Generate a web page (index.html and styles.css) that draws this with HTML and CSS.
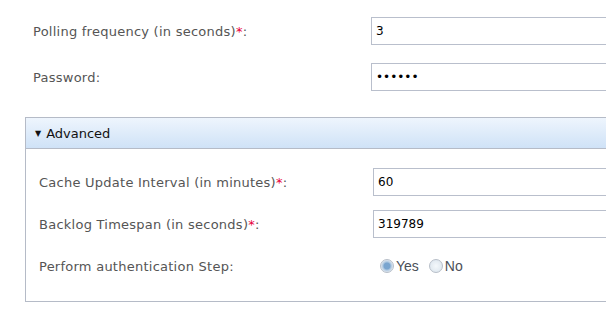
FILE: index.html
```html
<!DOCTYPE html>
<html lang="en">
<head>
    <meta charset="UTF-8">
    <title>Connection settings</title>
    <link rel="stylesheet" href="styles.css">
</head>
<body>
    <div class="form">
        <div class="form-row">
            <label class="form-label" for="polling">Polling frequency (in seconds)<span class="req">*</span>:</label>
            <input class="form-input" type="text" id="polling" value="3">
        </div>
        <div class="form-row">
            <label class="form-label" for="password">Password:</label>
            <input class="form-input" type="password" id="password" value="secret">
        </div>

        <div class="panel">
            <div class="panel-header">
                <span class="caret">&#9660;</span>
                <span class="panel-title">Advanced</span>
            </div>
            <div class="panel-body">
                <div class="form-row">
                    <label class="form-label" for="cache">Cache Update Interval (in minutes)<span class="req">*</span>:</label>
                    <input class="form-input" type="text" id="cache" value="60">
                </div>
                <div class="form-row">
                    <label class="form-label" for="backlog">Backlog Timespan (in seconds)<span class="req">*</span>:</label>
                    <input class="form-input" type="text" id="backlog" value="319789">
                </div>
                <div class="form-row radio-row">
                    <span class="form-label">Perform authentication Step:</span>
                    <div class="radios">
                        <label class="radio"><span class="radio-dot checked"></span>Yes</label>
                        <label class="radio"><span class="radio-dot"></span>No</label>
                    </div>
                </div>
            </div>
        </div>
    </div>
</body>
</html>
```

FILE: styles.css
```css
html, body {
    margin: 0;
    padding: 0;
    background-color: #fff;
    overflow: hidden;
}
body {
    font-family: "DejaVu Sans", Verdana, sans-serif;
    font-size: 13px;
    letter-spacing: 0.25px;
    color: #555;
}
.form {
    padding-top: 17px;
    width: 760px;
}
.form-row {
    display: flex;
    align-items: center;
    margin-bottom: 18px;
    padding-left: 33px;
}
.form-label {
    width: 338px;
    flex-shrink: 0;
}
.req {
    color: #e8003a;
}
.form-input {
    box-sizing: border-box;
    width: 300px;
    height: 28px;
    margin: 0;
    padding: 0 4px;
    border: 1px solid #b9bfcc;
    font-family: "DejaVu Sans", Verdana, sans-serif;
    font-size: 12px;
    color: #000;
    outline: none;
}
.panel {
    margin: 26px 0 0 25px;
    border: 1px solid #b5bbc7;
}
.panel-header {
    height: 30px;
    display: flex;
    align-items: center;
    padding-left: 9px;
    border-bottom: 1px solid #b5bbc7;
    background: linear-gradient(#eef5fd, #cfe2f7);
    color: #111;
    font-size: 13px;
    letter-spacing: 0;
}
.caret {
    font-size: 8px;
    margin-right: 5px;
}
.panel-body {
    padding: 19px 0 7px;
}
.panel-body .form-row {
    padding-left: 13px;
    margin-bottom: 14px;
}
.panel-body .form-label {
    width: 334px;
}
.radio-row {
    height: 28px;
}
.radios {
    display: flex;
    gap: 10px;
    padding-left: 7px;
    font-family: "Liberation Sans", Arial, sans-serif;
    font-size: 14px;
    letter-spacing: 0;
    color: #4a4f57;
}
.radio {
    display: flex;
    align-items: center;
    gap: 2px;
}
.radio-dot {
    box-sizing: border-box;
    width: 14px;
    height: 14px;
    border-radius: 50%;
    border: 1px solid #b7bec8;
    background: radial-gradient(#f4f8fb, #d9e3ec);
}
.radio-dot.checked {
    background: radial-gradient(circle, #7aa5cf 0 3px, #a9c4de 4px, #dfe8f1 6px);
}
```
